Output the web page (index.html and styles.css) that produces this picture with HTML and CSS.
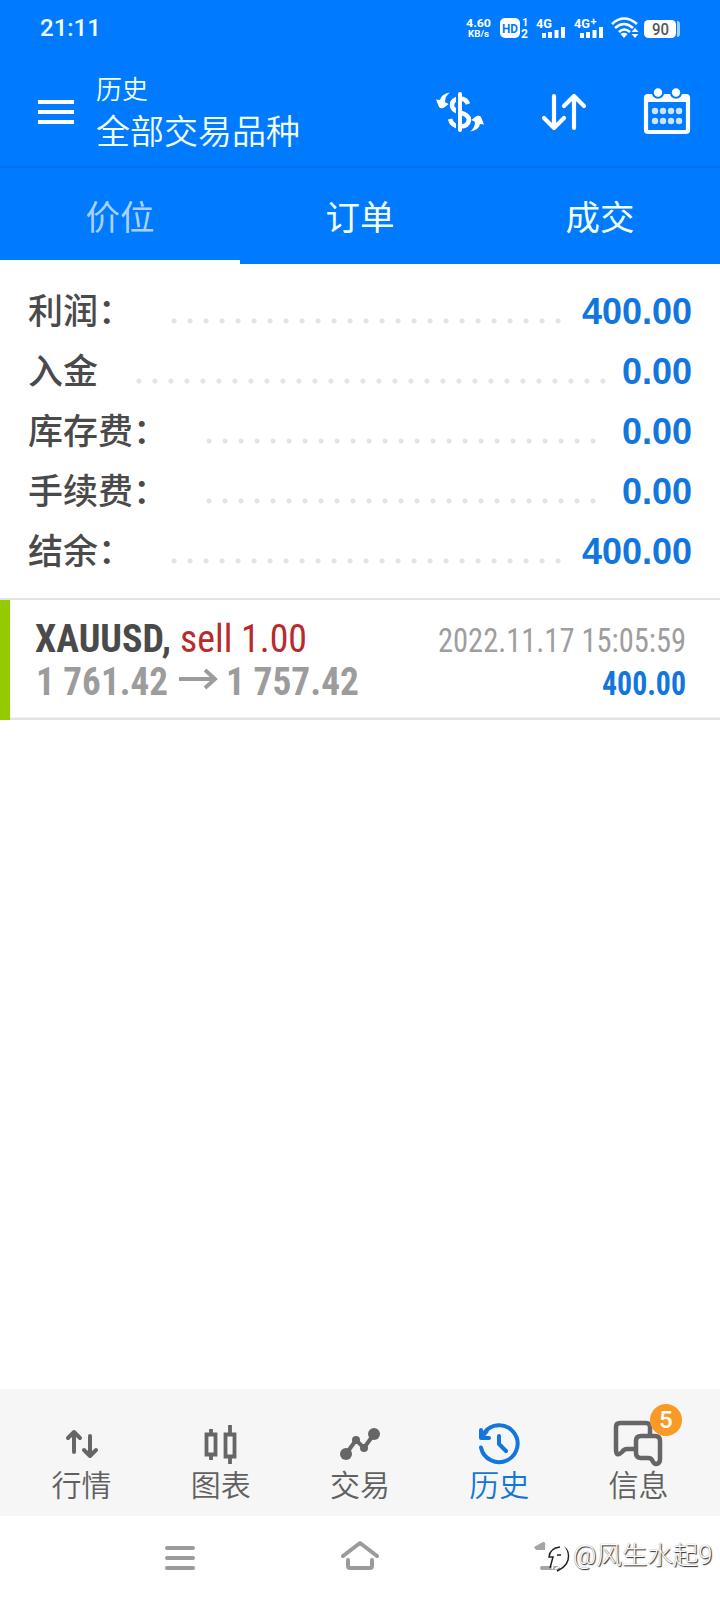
FILE: index.html
```html
<!DOCTYPE html>
<html lang="zh-CN">
<head>
<meta charset="utf-8">
<title>历史</title>
<link rel="stylesheet" href="styles.css">
</head>
<body>
<div class="screen">
  <header class="top">
    <div class="status">
      <span class="clock">21:11</span>
      <svg class="status-icons" width="224" height="30" viewBox="0 0 224 30" fill="#fff">
        <g font-weight="700">
          <text x="6" y="14" font-size="11.500" textLength="25" lengthAdjust="spacingAndGlyphs">4.60</text>
          <text x="8" y="24" font-size="9.500" textLength="21" lengthAdjust="spacingAndGlyphs">KB/s</text>
          <rect x="40" y="5" width="20" height="20" rx="5"/>
          <text x="42" y="20" font-size="13" fill="#007aff" textLength="16" lengthAdjust="spacingAndGlyphs">HD</text>
          <text x="62" y="13" font-size="11">1</text>
          <text x="61" y="24.500" font-size="12">2</text>
          <text x="76" y="14.500" font-size="13.500" textLength="16" lengthAdjust="spacingAndGlyphs">4G</text>
          <text x="114" y="14.500" font-size="13.500" textLength="16" lengthAdjust="spacingAndGlyphs">4G</text>
          <text x="130.500" y="11.500" font-size="11">+</text>
        </g>
        <path d="M82 20h4v5h-4zM88 19h4v6h-4zM94.500 17h4v8h-4zM101 14h4v11h-4zM120 20h4v5h-4zM126 19h4v6h-4zM132.500 17h4v8h-4zM139 14h4v11h-4z"/>
        <g fill="none" stroke="#fff" stroke-width="2.600"><path d="M152 11Q164 0 177 11M155 15Q164 7 173 15M159 19Q164 14 170 19"/></g>
        <path d="M160.500 21Q164 18.500 167.500 21L164 25zM171.500 19l3.500-4 3.500 4zM171.500 21h7L175 25z"/>
        <rect x="184" y="7" width="32" height="18" rx="4.500"/>
        <path d="M217 8q3 0 3 3v10q0 3-3 3z" opacity=".65"/>
        <text x="192" y="21.500" font-size="16" font-weight="500" fill="#555" textLength="17" lengthAdjust="spacingAndGlyphs">90</text>
      </svg>
    </div>
    <div class="appbar">
      <svg class="menu" width="36" height="26" viewBox="0 0 36 26" fill="#fff"><path d="M0 1h36v4H0zM0 11h36v4H0zM0 21h36v4H0z"/></svg>
      <div class="titles"><div class="subtitle">历史</div><div class="title">全部交易品种</div></div>
      <svg class="actions" width="260" height="52" viewBox="0 0 260 52" fill="#fff">
        <path d="M14 8.500Q5 10 4 16L0 15.500 3 23Q5 25.500 9 23L12.500 20 9 18Q9 12 14 8.500Z"/>
        <path d="M34 47.500Q43 46 44 40L48 40.500 45 33Q43 30.500 39 33L35.500 36 39 38Q39 44 34 47.500Z"/>
        <path d="M32 20Q30 14.500 24 14.500Q16 15 16 21.500Q16 26 24 28.500Q33 31 33 36Q32 42.500 24 42.500Q16 42.500 14 35" fill="none" stroke="#fff" stroke-width="4.600"/>
        <path d="M21 11v36" stroke="#007aff" stroke-width="2"/>
        <path d="M24 10v36" stroke="#fff" stroke-width="4" stroke-linecap="round"/>
        <g fill="none" stroke="#fff" stroke-width="4.200" stroke-linecap="round" stroke-linejoin="round"><path d="M118 12v32M108 34l10 10 10-10M138 44V12M128 22l10-10 10 10"/></g>
        <rect x="210" y="12" width="42" height="36" rx="2" fill="none" stroke="#fff" stroke-width="4.200"/>
        <path d="M209 11h44v7h-44z"/>
        <circle cx="222" cy="8.500" r="5.200" stroke="#007aff" stroke-width="2"/><circle cx="240" cy="8.500" r="5.200" stroke="#007aff" stroke-width="2"/>
        <g opacity=".8"><circle cx="219" cy="27" r="3.200"/><circle cx="227" cy="27" r="3.200"/><circle cx="235" cy="27" r="3.200"/><circle cx="243" cy="27" r="3.200"/><circle cx="219" cy="37" r="3.200"/><circle cx="227" cy="37" r="3.200"/><circle cx="235" cy="37" r="3.200"/><circle cx="243" cy="37" r="3.200"/></g>
      </svg>
    </div>
    <nav class="tabs"><span class="tab active">价位</span><span class="tab">订单</span><span class="tab">成交</span></nav>
  </header>
  <section class="summary">
    <div class="row"><span class="label">利润：</span><span class="dots profit"></span><b>400.00</b></div>
    <div class="row"><span class="label">入金</span><span class="dots deposit"></span><b>0.00</b></div>
    <div class="row"><span class="label">库存费：</span><span class="dots fee"></span><b>0.00</b></div>
    <div class="row"><span class="label">手续费：</span><span class="dots fee"></span><b>0.00</b></div>
    <div class="row"><span class="label">结余：</span><span class="dots profit"></span><b>400.00</b></div>
  </section>
  <section class="deal">
    <svg width="720" height="120" viewBox="0 600 720 120">
      <path d="M0 600h10v120H0z" fill="#96ca00"/>
      <path d="M10 717.500h710v2.500H10z" fill="#e3e3e3"/>
      <g font-weight="700">
        <text x="35" y="652" font-size="39.500" fill="#4a4a4a" textLength="136" lengthAdjust="spacingAndGlyphs">XAUUSD,</text>
        <text x="36" y="695" font-size="39.500" fill="#9c9c9c" textLength="132" lengthAdjust="spacingAndGlyphs">1 761.42</text>
        <text x="226" y="695" font-size="39.500" fill="#9c9c9c" textLength="133" lengthAdjust="spacingAndGlyphs">1 757.42</text>
        <text x="602" y="695" font-size="33" fill="#1276dc" textLength="84" lengthAdjust="spacingAndGlyphs">400.00</text>
      </g>
      <text x="180" y="652" font-size="39.500" fill="#b92a2d" textLength="127" lengthAdjust="spacingAndGlyphs">sell 1.00</text>
      <text x="438" y="652" font-size="33" fill="#9e9e9e" textLength="248" lengthAdjust="spacingAndGlyphs">2022.11.17 15:05:59</text>
      <path d="M179 679h36M205 670l10 9-10 9" fill="none" stroke="#9c9c9c" stroke-width="3.800"/>
    </svg>
  </section>
  <main class="blank"></main>
  <nav class="bottom">
    <div class="item"><svg width="60" height="60" viewBox="52 1410 60 60"><path d="M74 1452v-20M68 1438l6-6 6 6M90 1436v20M84 1450l6 6 6-6" fill="none" stroke="#666" stroke-width="4" stroke-linecap="round" stroke-linejoin="round"/></svg><span>行情</span></div>
    <div class="item"><svg width="60" height="60" viewBox="191 1410 60 60"><path d="M206.500 1434.500h9v20h-9zM225.500 1434.500h9v22h-9zM211 1429v5M211 1455v5M230 1425v9M230 1457v7" fill="none" stroke="#666" stroke-width="3.800"/></svg><span>图表</span></div>
    <div class="item"><svg width="60" height="60" viewBox="330 1410 60 60"><path d="M346 1454l10-14 8 8 10-14" fill="none" stroke="#666" stroke-width="4"/><g fill="#666"><circle cx="346" cy="1454" r="6"/><circle cx="356" cy="1440" r="4"/><circle cx="364" cy="1448" r="4"/><circle cx="374" cy="1434" r="6"/></g></svg><span>交易</span></div>
    <div class="item current"><svg width="60" height="60" viewBox="469 1410 60 60"><path d="M481 1447.500A18.500 18.500 0 1 0 484 1433M481 1430v8h8M481.500 1437.500l5-6M499 1436v8l7 7" fill="none" stroke="#1276dc" stroke-width="4" stroke-linecap="round" stroke-linejoin="round"/></svg><span>历史</span></div>
    <div class="item"><svg width="60" height="60" viewBox="608 1410 60 60"><path d="M634 1449h-7q-3 0-5 3-3 3-5 2-1-1-1-5v-22q0-4 4-4h26q4 0 4 4v8" fill="none" stroke="#666" stroke-width="4.500"/><path d="M641 1436h14q5 0 5 5v18q0 5-4 5-2 0-4-4-1-2-4-2h-7q-5 0-5-5v-12q0-5 5-5z" fill="#f6f6f6" stroke="#666" stroke-width="4.500"/></svg><span>信息</span><i class="badge">5</i></div>
  </nav>
  <footer class="system">
    <svg width="720" height="84" viewBox="0 1516 720 84">
      <g fill="none" stroke="#9b9b9b" stroke-width="4" stroke-linecap="round" stroke-linejoin="round"><path d="M167 1548h26M167 1558h26M167 1568h26M343 1556l17-13 17 13M348 1560v6q0 2 2 2h20q2 0 2-2v-6"/></g>
      <path d="M534 1547l9-5q3 0 2 3v5h-9zM542 1566h18v4h-18q-2 0-2-2t2-2z" fill="#a5a5a5"/>
      <path d="M550 1568L553 1557H549Q550 1548 560 1547M557 1555h4M564 1547Q570 1551 568 1560 566 1567 557 1571" fill="none" stroke="#222" stroke-width="1.500"/>
      <path d="M552 1569L555 1558M563 1546Q568 1551 566 1559 564 1565 555 1569" fill="none" stroke="#fff" stroke-width="1.500"/>
    </svg>
    <div class="watermark">@风生水起9</div>
  </footer>
</div>
</body>
</html>
```
FILE: styles.css
```css
* { box-sizing: border-box; }
body { margin: 0; background: #fff; font-family: Roboto, "Noto Sans CJK SC", sans-serif; }
svg { display: block; flex: none; }
.screen { width: 720px; height: 1600px; display: flex; flex-direction: column; overflow: hidden; }
.top { height: 264px; flex: none; background: #007aff; color: #f2ffff; }
.status { height: 56px; display: flex; justify-content: space-between; padding: 0 36px 0 40px; }
.clock { font-size: 24px; line-height: 56px; font-weight: 500; }
.status-icons { margin-top: 13px; }
.appbar { height: 112px; display: flex; padding-left: 38px; border-bottom: 2px solid #0070ec; }
.menu { margin-top: 43px; }
.titles { width: 362px; padding: 15px 0 0 22px; font-weight: 350; }
.subtitle { font-size: 26px; line-height: 38px; }
.title { font-size: 34px; line-height: 46px; }
.actions { margin-top: 28px; }
.tabs { height: 96px; display: flex; }
.tab { flex: 1; text-align: center; font-size: 34.500px; line-height: 100px; height: 96px; border-bottom: 4px solid transparent; }
.active { color: #a9d1ff; border-color: #fff; }
.summary { height: 334px; flex: none; padding: 17px 28px 0; }
.row { height: 60px; display: flex; line-height: 60px; color: #4a4a4a; }
.label { font-size: 35px; line-height: 64px; font-weight: 500; white-space: nowrap; }
.row b { margin-left: auto; font: 700 36px/62px "Liberation Sans", sans-serif; color: #1276dc; }
.dots { height: 6px; margin-top: 37px; background: radial-gradient(circle, #e4e4e4 2.200px, transparent 2.900px) 0 0 / 16px 6px repeat-x; }
.profit { width: 400px; margin-left: 33px; }
.deposit { width: 480px; margin-left: 33px; }
.fee { width: 400px; margin-left: 33px; }
.deal { height: 122px; flex: none; border-top: 2px solid #e3e3e3; font-family: "Roboto Condensed", Roboto, sans-serif; font-stretch: 75%; }
.blank { flex: 1; }
.bottom { height: 127px; flex: none; display: flex; background: #f6f6f6; padding: 21px 12px 0; }
.item { flex: 1; display: flex; flex-direction: column; align-items: center; position: relative; color: #606060; font-size: 30px; font-weight: 350; }
.item span { line-height: 40px; margin-top: -4px; }
.item.current { color: #1276dc; }
.badge { position: absolute; left: 81px; top: -6px; width: 32px; height: 32px; border-radius: 50%; background: #f99a25; color: #fff; font-size: 24px; line-height: 33px; font-style: normal; font-weight: 500; text-align: center; }
.system { height: 84px; flex: none; position: relative; }
.watermark { position: absolute; left: 573px; top: 20px; font-size: 25.500px; line-height: 38px; font-weight: 300; color: #fff; text-shadow: 1px 1px 1px #222, 0 0 1px #888; white-space: nowrap; }
```
